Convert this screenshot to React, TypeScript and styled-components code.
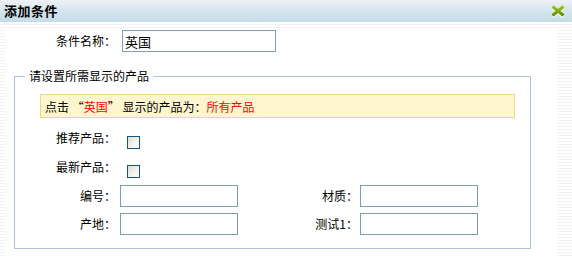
import * as React from 'react';
import styled, { createGlobalStyle } from 'styled-components';

const GlobalStyle = createGlobalStyle`
	html, body {
		margin: 0;
		padding: 0;
		background: #fff;
	}
	body {
		font-family: "Noto Sans CJK SC", "DejaVu Sans", sans-serif;
		font-size: 12px;
		color: #000;
	}
`;

const Dialog = styled.div`
	width: 572px;
	height: 258px;
	display: flex;
	flex-direction: column;
	background: repeating-linear-gradient(to bottom, #f2f2f2 0 1px, #fff 1px 3px);
	overflow: hidden;
`;

const TitleBar = styled.div`
	height: 22px;
	flex: none;
	display: flex;
	align-items: center;
	justify-content: space-between;
	padding: 0 6px 0 4px;
	background: linear-gradient(to bottom, #eef2f5 0%, #d6e6ee 45%, #c3dce8 100%);
`;

const Title = styled.div`
	font-size: 13px;
	font-weight: bold;
	line-height: 22px;
	letter-spacing: 0.5px;
`;

const CloseButton = styled.div`
	width: 16px;
	height: 13px;
	display: flex;
	cursor: pointer;
`;

const Panel = styled.div`
	flex: 1;
	margin: 6px 15px 0 5px;
	padding: 2px 0 0 9px;
	background: #fff;
`;

const NameRow = styled.div`
	display: flex;
	align-items: center;
	height: 22px;
`;

const Label = styled.label<{ $width: number }>`
	width: ${props => props.$width}px;
	flex: none;
	text-align: right;
	padding-right: 2px;
	box-sizing: border-box;
	line-height: 16px;
	white-space: nowrap;
`;

const TextInput = styled.input<{ $width: number }>`
	width: ${props => props.$width}px;
	height: 22px;
	box-sizing: border-box;
	margin: 0 0 0 ${props => props.$offset || 0}px;
	border: 1px solid #7f9db9;
	padding: 0 2px;
	font-family: "Noto Sans CJK SC", sans-serif;
	font-size: 13px;
	color: #000;
	background: #fff;
	outline: none;
`;

const FieldSet = styled.fieldset`
	margin: 17px 0 0 0;
	width: 517px;
	box-sizing: border-box;
	border: 1px solid #b0c4de;
	padding: 0 0 13px 0;
`;

const Legend = styled.legend`
	margin-left: 10px;
	padding: 0 4px;
	line-height: 14px;
	font-size: 12px;
`;

const Notice = styled.div`
	margin: 11px 15px 0 25px;
	height: 24px;
	box-sizing: border-box;
	border: 1px solid #f5d982;
	background: #fff6cf;
	padding: 0 4px;
	display: flex;
	align-items: center;
	white-space: nowrap;
`;

const Red = styled.span`
	color: #f00;
`;

const Rows = styled.div`
	margin-top: 12px;
	display: flex;
	flex-direction: column;
`;

const CheckRow = styled.div<{ $height: number }>`
	display: flex;
	align-items: flex-start;
	height: ${props => props.$height}px;
`;

const CheckBox = styled.input`
	appearance: none;
	width: 13px;
	height: 13px;
	margin: 6px 0 0 9px;
	box-sizing: border-box;
	border: 1px solid #1c5180;
	background: linear-gradient(135deg, #dcdcd6 0%, #f4f4f1 60%, #fff 100%);
`;

const FieldRow = styled.div`
	display: flex;
	align-items: center;
	height: 22px;
	margin-bottom: 6px;

	&:last-child {
		margin-bottom: 0;
	}
`;

function CloseIcon() {
	return (
		<svg width="16" height="13" viewBox="0 0 16 13">
			<defs>
				<linearGradient id="xg" x1="0" y1="0" x2="0" y2="1">
					<stop offset="0" stopColor="#9cc21e" />
					<stop offset="1" stopColor="#5e8c04" />
				</linearGradient>
			</defs>
			<path d="M2.5 2 L13.5 11 M13.5 2 L2.5 11" stroke="#fff" strokeWidth="3" transform="translate(0 1)" />
			<path d="M2.5 1.5 L13.5 10.5 M13.5 1.5 L2.5 10.5" stroke="url(#xg)" strokeWidth="3" />
		</svg>
	);
}

export default function App() {
	return (
		<Dialog>
			<GlobalStyle />
			<TitleBar>
				<Title>添加条件</Title>
				<CloseButton><CloseIcon /></CloseButton>
			</TitleBar>
			<Panel>
				<NameRow>
					<Label $width={104}>条件名称：</Label>
					<TextInput $width={154} $offset={4} defaultValue="英国" />
				</NameRow>
				<FieldSet>
					<Legend>请设置所需显示的产品</Legend>
					<Notice>
						点击&nbsp;“<Red>英国</Red>”&nbsp;显示的产品为：<Red>所有产品</Red>
					</Notice>
					<Rows>
						<CheckRow $height={29}>
							<Label $width={103}>推荐产品：</Label>
							<CheckBox type="checkbox" />
						</CheckRow>
						<CheckRow $height={26}>
							<Label $width={103}>最新产品：</Label>
							<CheckBox type="checkbox" />
						</CheckRow>
						<FieldRow>
							<Label $width={103}>编号：</Label>
							<TextInput $width={118} $offset={2} />
							<Label $width={122}>材质：</Label>
							<TextInput $width={118} />
						</FieldRow>
						<FieldRow>
							<Label $width={103}>产地：</Label>
							<TextInput $width={118} $offset={2} />
							<Label $width={122}>测试1：</Label>
							<TextInput $width={118} />
						</FieldRow>
					</Rows>
				</FieldSet>
			</Panel>
		</Dialog>
	);
}
